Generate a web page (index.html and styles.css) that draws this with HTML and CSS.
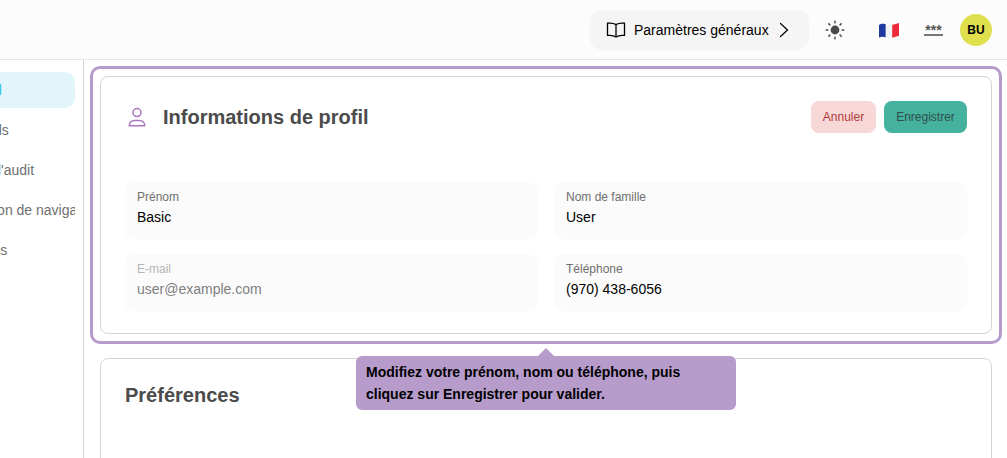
FILE: index.html
```html
<!DOCTYPE html>
<html lang="fr">
<head>
<meta charset="utf-8">
<title>Informations de profil</title>
<link rel="stylesheet" href="styles.css">
</head>
<body>
<header class="topbar">
  <button class="guide">
    <svg class="guide-book" viewBox="0 0 20 20" fill="none" stroke="currentColor" stroke-width="1.3" stroke-linejoin="round" stroke-linecap="round"><path d="M10 4.6C8.3 3.4 5.2 2.9 1.5 3.2v12.2c3.7-.3 6.8.2 8.5 1.6 1.7-1.4 4.800-1.900 8.500-1.600V3.200C14.800 2.900 11.700 3.400 10 4.600zM10 4.600V17"/></svg>
    <span>Paramètres généraux</span>
    <svg class="guide-chevron" viewBox="0 0 12 16" fill="none" stroke="currentColor" stroke-width="1.200" stroke-linecap="round" stroke-linejoin="round"><path d="M2.500 1.500 9.500 8l-7 6.500"/></svg>
  </button>
  <svg class="sun" viewBox="0 0 20 20" fill="none" stroke="#4a4a4a" stroke-width="1.500" stroke-linecap="round"><circle cx="10" cy="10" r="4.400" fill="#4a4a4a" stroke="none"/><path d="M10 1.200v1.600M10 17.200v1.600M1.200 10h1.600M17.200 10h1.600M3.800 3.800l1.100 1.100M15.100 15.100l1.100 1.100M3.800 16.200l1.100-1.100M15.100 4.900l1.100-1.100"/></svg>
  <svg class="flag" viewBox="0 0 22 18"><path d="M1 4c2-1.500 4-1.500 6.800-.8v13C5 15.500 3 15.500 1 16.600z" fill="#1f3a9e"/><path d="M7.800 3.200c2.300.6 4.200.8 6.400.5v13c-2.200.3-4.100 0-6.400-.5z" fill="#f4f4f4"/><path d="M14.200 3.700c2.400-.3 4.500-1.200 6.800-1.700v12.800c-2.300.5-4.400 1.400-6.800 1.900z" fill="#ed2939"/></svg>
  <div class="stars">***</div>
  <div class="avatar">BU</div>
</header>
<div class="layout">
  <nav class="sidebar">
    <a class="nav-item active">Profil</a>
    <a class="nav-item">Détails</a>
    <a class="nav-item">Log d'audit</a>
    <a class="nav-item">Section de navigation</a>
    <a class="nav-item">Temps</a>
  </nav>
  <main class="main">
    <section class="card profile">
      <div class="highlight"></div>
      <div class="card-head">
        <svg class="user-icon" viewBox="0 0 20 20" fill="none" stroke="#a875bf" stroke-width="1.500" stroke-linejoin="round"><circle cx="10" cy="5.600" r="4"/><path d="M2.200 18.800c0-3.700 2.600-5.400 5.300-5.400h5c2.700 0 5.300 1.700 5.300 5.400z"/></svg>
        <h2 class="card-title">Informations de profil</h2>
        <div class="actions">
          <button class="btn btn-cancel">Annuler</button>
          <button class="btn btn-save">Enregistrer</button>
        </div>
      </div>
      <div class="fields">
        <div class="field"><label>Prénom</label><div class="value">Basic</div></div>
        <div class="field"><label>Nom de famille</label><div class="value">User</div></div>
        <div class="field disabled"><label>E-mail</label><div class="value">user@example.com</div></div>
        <div class="field"><label>Téléphone</label><div class="value">(970) 438-6056</div></div>
      </div>
      <div class="tip">Modifiez votre prénom, nom ou téléphone, puis cliquez sur Enregistrer pour valider.</div>
    </section>
    <section class="card prefs">
      <h2 class="card-title">Préférences</h2>
    </section>
  </main>
</div>
</body>
</html>
```
FILE: styles.css
```css
* { box-sizing: border-box; }
html, body { margin: 0; height: 100%; overflow: hidden; }
body { font-family: "Liberation Sans", Arial, sans-serif; background: #fff; color: #000; }

.topbar {
  height: 60px;
  background: #fcfcfc;
  border-bottom: 1px solid #e6e6e6;
  display: flex;
  align-items: center;
  justify-content: flex-end;
  padding: 0 15px 0 0;
}
.guide {
  display: flex;
  align-items: center;
  width: 219px;
  height: 40px;
  padding: 0 16px;
  background: #f5f5f5;
  border: 0;
  border-radius: 12px;
  font: 14px "Liberation Sans", Arial, sans-serif;
  color: #000;
}
.guide-book { width: 20px; height: 20px; margin-right: 8px; flex: none; }
.guide-chevron { width: 12px; height: 16px; margin-left: 9px; flex: none; }
.sun { width: 20px; height: 20px; margin-left: 16px; flex: none; }
.flag { width: 22px; height: 18px; margin-left: 33px; flex: none; }
.stars {
  width: 19px;
  margin-left: 24px;
  font-size: 14px;
  font-weight: 700;
  line-height: 9px;
  height: 12px;
  color: #555;
  text-align: center;
  border-bottom: 2px solid #777;
  letter-spacing: 0;
  padding-top: 2px;
}
.avatar {
  width: 32px;
  height: 32px;
  margin-left: 17px;
  border-radius: 50%;
  background: #e0e04e;
  display: flex;
  align-items: center;
  justify-content: center;
  font-size: 12px;
  font-weight: 700;
}

.layout { display: flex; height: 398px; }
.sidebar {
  width: 84px;
  flex: none;
  border-right: 1px solid #d4d4d4;
  padding-top: 12px;
  display: flex;
  flex-direction: column;
  gap: 4px;
}
.nav-item {
  display: block;
  width: 109px;
  height: 36px;
  margin-left: -34px;
  line-height: 36px;
  font-size: 14px;
  color: #6f6f6f;
  white-space: nowrap;
  overflow: hidden;
  border-radius: 10px;
}
.nav-item.active {
  background: #e1f5fa;
  color: #3cc3e0;
  font-weight: 700;
}

.main {
  flex: 1;
  padding: 16px 15px 0 16px;
  display: flex;
  flex-direction: column;
  gap: 24px;
}
.card {
  position: relative;
  border: 1px solid #d4d4d4;
  border-radius: 8px;
  padding: 24px;
  background: #fff;
  flex: none;
}
.profile { height: 258px; }
.prefs { height: 200px; }
.highlight {
  position: absolute;
  inset: -11px;
  border: 3px solid #b79ccb;
  border-radius: 10px;
  pointer-events: none;
}
.card-head {
  display: flex;
  align-items: center;
  height: 32px;
  margin-bottom: 49px;
}
.user-icon { width: 20px; height: 20px; margin: 0 16px 0 2px; flex: none; }
.card-title {
  margin: 0;
  font-size: 20px;
  font-weight: 700;
  color: #4b4b4b;
}
.prefs .card-title { margin-top: 1px; }
.actions { margin-left: auto; display: flex; gap: 8px; }
.btn {
  height: 32px;
  border: 0;
  border-radius: 8px;
  font: 12px "Liberation Sans", Arial, sans-serif;
  padding: 0;
}
.btn-cancel { width: 65px; background: #f8d7d7; color: #b03a3a; }
.btn-save { width: 83px; background: #45b29d; color: #2f4f4a; }

.fields {
  display: grid;
  grid-template-columns: 1fr 1fr;
  gap: 16px;
}
.field {
  height: 56px;
  padding: 8px 12px;
  background: #fbfbfb;
  border-radius: 10px;
  box-shadow: 0 1px 2px rgba(0, 0, 0, 0.03);
}
.field label {
  display: block;
  font-size: 12px;
  line-height: 14px;
  color: #6f6f6f;
}
.value {
  margin-top: 2px;
  font-size: 14px;
  line-height: 22px;
  color: #000;
}
.disabled label { color: #b5b5b5; }
.disabled .value { color: #808080; }

.tip {
  position: absolute;
  left: 255px;
  top: 279px;
  width: 380px;
  height: 54px;
  padding: 5px 10px;
  background: #b79ccb;
  border-radius: 6px;
  font-size: 14px;
  font-weight: 700;
  line-height: 22px;
  color: #000;
  z-index: 2;
}
.tip::before {
  content: "";
  position: absolute;
  left: 182px;
  top: -8px;
  border-left: 8px solid transparent;
  border-right: 8px solid transparent;
  border-bottom: 8px solid #b79ccb;
}
```
